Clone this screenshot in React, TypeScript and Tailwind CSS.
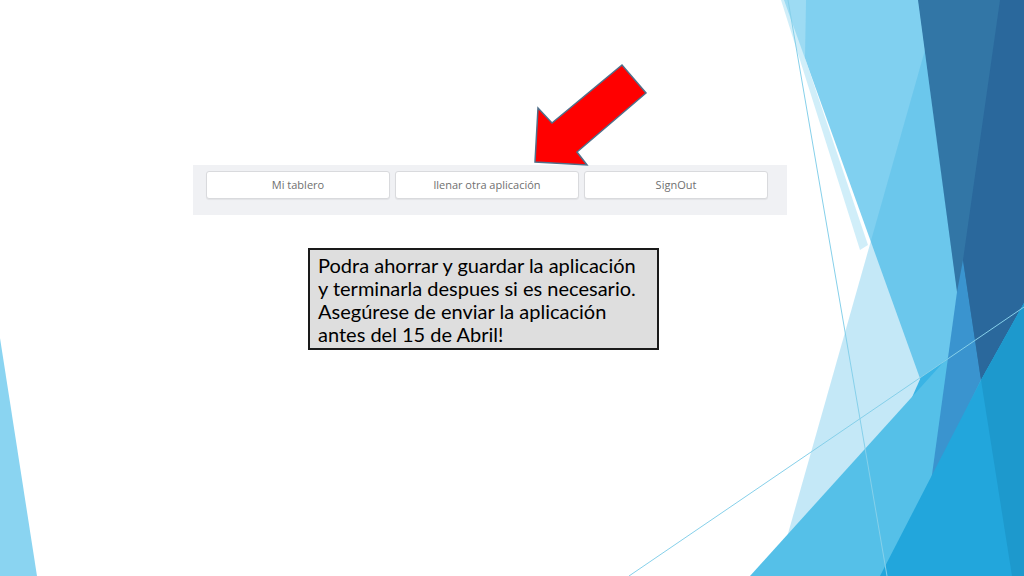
import React from "react";

function Facets() {
  return (
    <svg
      className="pointer-events-none absolute inset-0"
      width="1024"
      height="576"
      viewBox="0 0 1024 576"
    >
      {/* left sliver */}
      <polygon points="0,338 0,576 37,576" fill="#8ad4f1" />
      {/* right side facets */}
      <polygon points="784,0 935,0 1000,576 991,576" fill="#80d0f0" />
      <polygon points="781,0 806,0 805,58 868,245 860,250" fill="#b0e2f5" fillOpacity="0.6" />
      <polygon points="925,50 1024,420 1024,576 776,576" fill="#3bb3e4" fillOpacity="0.3" />
      <polygon points="921,377 958,352 946,470 880,470" fill="#3ab4e5" />
      <polygon points="750,576 1024,273 1024,576" fill="#55c0e8" />
      <polygon points="918,0 1024,0 1024,303 981,380 957,292" fill="#3276a6" />
      <polygon points="957,292 963,260 981,380 931,482" fill="#3a94cf" />
      <polygon points="1000,0 1024,0 1024,303 981,380 963,260" fill="#2a689c" />
      <polygon points="880,576 981,380 1024,303 1024,576" fill="#22a6dc" />
      <polygon points="981,380 1024,303 1024,576 1012,576" fill="#1d99cd" />
      <line x1="788" y1="0" x2="887" y2="576" stroke="#86d0ea" strokeWidth="1" />
      <line x1="629" y1="576" x2="1024" y2="307" stroke="#86d0ea" strokeWidth="1" />
    </svg>
  );
}

function Arrow() {
  return (
    <svg
      className="absolute left-0 top-0"
      width="1024"
      height="576"
      viewBox="0 0 1024 576"
    >
      <polygon
        points="535,162 538,108 552,123 622,65 646,93 577,152 587,165"
        fill="#ff0000"
        stroke="#4f6f8a"
        strokeWidth="1.5"
        strokeLinejoin="miter"
      />
    </svg>
  );
}

export default function App() {
  const buttons = ["Mi tablero", "llenar otra aplicación", "SignOut"];
  return (
    <div className="relative h-[576px] w-[1024px] overflow-hidden bg-white">
      <Facets />

      <div className="relative flex flex-col">
        {/* captura de la barra de botones */}
        <div className="ml-[193px] mt-[165px] flex h-[50px] w-[594px] gap-[5px] bg-[#f0f1f4] pl-[13px] pt-[6px]">
          {buttons.map((b) => (
            <button
              key={b}
              className="h-[28px] w-[184px] rounded-[3px] border border-[#d9dadd] bg-white text-[11px] text-[#707070] shadow-[0_1px_1px_rgba(0,0,0,0.06)] [font-family:'Open_Sans',sans-serif]"
            >
              {b}
            </button>
          ))}
        </div>

        {/* nota */}
        <div className="ml-[308px] mt-[33px] h-[102px] w-[351px] border-2 border-[#1a1a1a] bg-[#dedede] px-[8px] pt-[4px] text-[20px] leading-[23px] text-black [font-family:Lato,sans-serif]">
          Podra ahorrar y guardar la aplicación
          <br />y terminarla despues si es necesario.
          <br />
          Asegúrese de enviar la aplicación
          <br />
          antes del 15 de Abril!
        </div>
      </div>

      <Arrow />
    </div>
  );
}
